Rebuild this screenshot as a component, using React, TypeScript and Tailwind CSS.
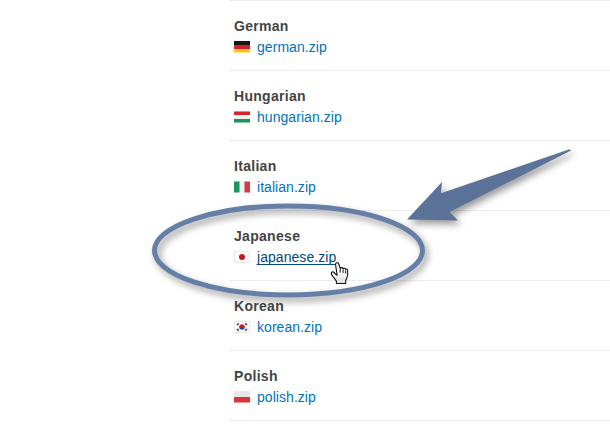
import type { ReactNode } from "react";

type Language = {
  name: string;
  file: string;
  flag: ReactNode;
  active?: boolean;
};

const languages: Language[] = [
  {
    name: "German",
    file: "german.zip",
    flag: (
      <>
        <rect width="16" height="4" fill="#151515" />
        <rect y="4" width="16" height="4" fill="#d5202a" />
        <rect y="8" width="16" height="3.5" fill="#fdc60f" />
      </>
    ),
  },
  {
    name: "Hungarian",
    file: "hungarian.zip",
    flag: (
      <>
        <rect width="16" height="11.5" fill="#f1f1f1" />
        <rect y="0.5" width="16" height="3.5" fill="#d8232c" />
        <rect y="8" width="16" height="3.5" fill="#18965a" />
      </>
    ),
  },
  {
    name: "Italian",
    file: "italian.zip",
    flag: (
      <>
        <rect width="16" height="11.5" fill="#f1f1f1" />
        <rect y="0.5" width="5.5" height="11" fill="#1b9861" />
        <rect x="10.5" y="0.5" width="5.5" height="11" fill="#d43a40" />
      </>
    ),
  },
  {
    name: "Japanese",
    file: "japanese.zip",
    active: true,
    flag: (
      <>
        <rect x="0.5" y="0.5" width="15" height="11" fill="#fff" stroke="#e8e8e8" />
        <circle cx="8" cy="6" r="3" fill="#c5161d" />
      </>
    ),
  },
  {
    name: "Korean",
    file: "korean.zip",
    flag: (
      <>
        <rect x="0.5" y="0.5" width="15" height="11" fill="#fff" stroke="#e8e8e8" />
        <path d="M5.2 6a2.8 2.8 0 0 1 5.6 0z" fill="#d4202a" />
        <path d="M5.2 6a2.8 2.8 0 0 0 5.6 0z" fill="#1c4c9c" />
        <path
          d="M3 4 4.8 2.4M11.2 2.4 13 4M3 8 4.8 9.6M11.2 9.6 13 8"
          stroke="#55585c"
          strokeWidth="1.8"
        />
      </>
    ),
  },
  {
    name: "Polish",
    file: "polish.zip",
    flag: (
      <>
        <rect width="16" height="6" fill="#e7e7e7" />
        <rect y="6" width="16" height="5.5" fill="#db353b" />
      </>
    ),
  },
];

const LanguageRow = ({ name, file, flag, active }: Language) => (
  <li className="h-[70px] border-t border-[#ececec] pt-[15px] pl-[5px]">
    <h3 className="h-[21px] text-[14px] leading-[20px] font-bold tracking-[0.3px] text-[#444]">
      {name}
    </h3>
    <div className="flex h-5 items-start">
      <svg width="16" height="12" viewBox="0 0 16 12" className="mt-1 mr-[7px] shrink-0">
        {flag}
      </svg>
      <a
        href="#"
        className={`text-[14px] leading-[20px] tracking-[0.05px] ${
          active
            ? "text-[#004b80] underline decoration-1 underline-offset-[2px] [text-decoration-skip-ink:none]"
            : "text-[#0073b8]"
        }`}
      >
        {file}
      </a>
    </div>
  </li>
);

const Annotations = () => (
  <svg
    width="610"
    height="426"
    viewBox="0 0 610 426"
    className="pointer-events-none absolute top-0 left-0"
  >
    <defs>
      <filter
        id="shadow"
        x="-10%"
        y="-20%"
        width="120%"
        height="150%"
        colorInterpolationFilters="sRGB"
      >
        <feDropShadow dx="3" dy="4" stdDeviation="3.5" floodColor="#000" floodOpacity="0.4" />
      </filter>
      <linearGradient id="hand" x1="0" y1="0" x2="0" y2="1">
        <stop offset="0.4" stopColor="#fff" />
        <stop offset="1" stopColor="#dcdcdc" />
      </linearGradient>
    </defs>
    <ellipse
      cx="288.5"
      cy="250.5"
      rx="134"
      ry="44.5"
      fill="none"
      stroke="#667fa6"
      strokeWidth="5"
      filter="url(#shadow)"
    />
    <path
      d="M407 219.5 442 182 441 193.3 569.5 149.3 571 150.5 449.5 212 458 220.5z"
      fill="#5b7399"
      filter="url(#shadow)"
    />
    {/* hand cursor */}
    <path
      d="M335.5 264.2c0-1.9 2.8-2.1 3.3-.2l1.4 4.4c.4-1.2 2.6-1.1 2.8.4.5-1 2.4-.8 2.6.6.6-.9 2 .1 2.1 1.4.2 2.6.2 4.9-.8 7.2l-1.2 2.6v2.9h-9.3v-2.4l-3.8-5c-1.5-2-1.7-3.1-.8-3.9 1-.9 2.4-.1 3.5 1.8l1.8 1.2z"
      fill="url(#hand)"
      stroke="#111"
      strokeWidth="1.1"
      strokeLinejoin="round"
    />
    <path d="M340.2 268.6v4M343.1 269.4v3.5M345.6 270.5v3" stroke="#111" strokeWidth="1" />
  </svg>
);

const App = () => {
  return (
    <main className="relative h-[426px] w-[610px] overflow-hidden bg-white font-['Liberation_Sans',Arial,sans-serif]">
      <ul className="ml-[229px] border-b border-[#ececec]">
        {languages.map((language) => (
          <LanguageRow key={language.file} {...language} />
        ))}
      </ul>
      <Annotations />
    </main>
  );
};

export default App;
